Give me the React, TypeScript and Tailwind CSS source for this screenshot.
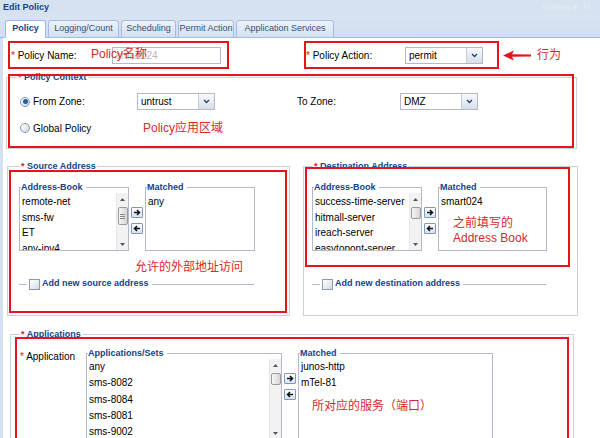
import React from "react";

const Star = () => <span className="text-[#e3141b]">*</span>;

function Chevron() {
  return (
    <svg width="7" height="5" viewBox="0 0 7 5">
      <path d="M1 1 L3.5 3.5 L6 1" fill="none" stroke="#21477c" strokeWidth="1.4" />
    </svg>
  );
}

function Select({ value, className }: { value: string; className: string }) {
  return (
    <div className={`flex h-[17px] border border-[#b5b8c8] bg-white ${className}`}>
      <span className="flex-1 pl-[3px] leading-[15px]">{value}</span>
      <span className="flex w-[16px] items-center justify-center border-l border-[#c5cad6] bg-gradient-to-b from-[#f8f9fb] to-[#d8dee8]">
        <Chevron />
      </span>
    </div>
  );
}

function Radio({ checked }: { checked?: boolean }) {
  return (
    <span className="flex h-[10px] w-[10px] items-center justify-center rounded-full border border-[#8794a8] bg-gradient-to-br from-white to-[#d3d8e0]">
      {checked && <span className="h-[5px] w-[5px] rounded-full bg-[#235d9f]" />}
    </span>
  );
}

function Tri({ up }: { up?: boolean }) {
  return (
    <svg width="5" height="3" viewBox="0 0 5 3">
      <path d={up ? "M0 3 L2.5 0 L5 3 Z" : "M0 0 L2.5 3 L5 0 Z"} fill="#555" />
    </svg>
  );
}

function Scrollbar({ thumb, grip }: { thumb: string; grip?: boolean }) {
  return (
    <div className="flex w-[12px] flex-col items-center border-l border-[#e6e6e6] bg-[#f2f2f2]">
      <div className="flex h-[12px] items-center justify-center">
        <Tri up />
      </div>
      <div
        className={`mt-[2px] flex w-[10px] flex-col items-center justify-center gap-[1px] rounded-[2px] border border-[#9a9a9a] bg-gradient-to-r from-[#f7f7f7] to-[#d4d4d4] ${thumb}`}
      >
        {grip && (
          <>
            <span className="h-px w-[5px] bg-[#888]" />
            <span className="h-px w-[5px] bg-[#888]" />
            <span className="h-px w-[5px] bg-[#888]" />
          </>
        )}
      </div>
      <div className="flex-1" />
      <div className="flex h-[12px] items-center justify-center">
        <Tri />
      </div>
    </div>
  );
}

type ListProps = {
  title: string;
  items: string[];
  w: string;
  h: string;
  lead: string;
  thumb?: string;
  grip?: boolean;
  children?: React.ReactNode;
};

function ListBox({ title, items, w, h, lead, thumb, grip, children }: ListProps) {
  return (
    <fieldset className={`border border-[#b5b8c8] ${w}`}>
      <legend className="ml-[1px] pr-[3px] text-[9px] font-bold leading-[11px] text-[#15428b]">{title}</legend>
      <div className={`flex overflow-hidden ${h}`}>
        <div className={`flex-1 overflow-hidden whitespace-nowrap pl-[2px] ${lead}`}>
          {items.map((i) => (
            <div key={i}>{i}</div>
          ))}
          {children}
        </div>
        {thumb && <Scrollbar thumb={thumb} grip={grip} />}
      </div>
    </fieldset>
  );
}

function ArrowBtn({ left }: { left?: boolean }) {
  return (
    <div className="flex h-[11px] w-[12px] items-center justify-center rounded-[1px] border border-[#7d98bf] bg-gradient-to-b from-white to-[#d9e2ee]">
      <svg width="8" height="7" viewBox="0 0 8 7">
        <path
          d={left ? "M7 3.5H1.5M4 1L1.5 3.5L4 6" : "M1 3.5H6.5M4 1L6.5 3.5L4 6"}
          fill="none"
          stroke="#111"
          strokeWidth="1.5"
        />
      </svg>
    </div>
  );
}

function MoveButtons() {
  return (
    <div className="ml-[2px] mr-[2px] mt-[25px] flex flex-col gap-[5px]">
      <ArrowBtn />
      <ArrowBtn left />
    </div>
  );
}

function AddRow({ label, w }: { label: string; w: string }) {
  return (
    <div className={`flex h-[12px] items-center ${w}`}>
      <span className="h-px w-[8px] bg-[#b5b8c8]" />
      <span className="ml-[2px] h-[11px] w-[11px] border border-[#8e9aab] bg-gradient-to-br from-white to-[#d6dbe3]" />
      <span className="ml-[2px] whitespace-nowrap text-[9px] font-bold text-[#15428b]">{label}</span>
      <span className="ml-[3px] h-px flex-1 bg-[#b5b8c8]" />
    </div>
  );
}

const tabs = [
  { label: "Policy", w: "w-[41px]", active: true },
  { label: "Logging/Count", w: "w-[71px]" },
  { label: "Scheduling", w: "w-[55px]" },
  { label: "Permit Action", w: "w-[56px]" },
  { label: "Application Services", w: "w-[98px]" },
];

const Legend = ({ ml, text }: { ml: string; text: string }) => (
  <legend className={`px-[1px] text-[9px] font-bold leading-[11px] text-[#15428b] ${ml}`}>
    <Star /> {text}
  </legend>
);

const note = "text-[12px] leading-[16px] text-[#d42a2a]";

export default function App() {
  return (
    <div className="flex h-[438px] w-[600px] flex-col overflow-hidden bg-white font-['Liberation_Sans','Noto_Sans_CJK_SC',sans-serif] text-[10px] text-black">
      {/* title bar */}
      <div className="flex h-[15px] shrink-0 items-center bg-[#d6e2f0] pl-[3px]">
        <span className="text-[9px] font-bold text-[#15428b]">Edit Policy</span>
        <span className="ml-auto mr-[10px] text-[9px] text-[#e4ebf4]">Actions ▾ &nbsp;H</span>
      </div>

      {/* tabs */}
      <div className="flex h-[23px] shrink-0 items-end gap-[2px] border-b border-[#99bbe8] bg-gradient-to-b from-[#d9e4f2] to-[#d2def0] pl-[5px]">
        {tabs.map((t) => (
          <div
            key={t.label}
            className={`-mb-px flex h-[18px] items-center justify-center whitespace-nowrap rounded-t-[3px] border text-[9px] ${t.w} ${
              t.active
                ? "border-[#99bbe8] border-b-white bg-white font-bold text-[#15428b]"
                : "border-[#a3bde0] bg-gradient-to-b from-[#edf2f9] to-[#d4e0f0] text-[#34507a]"
            }`}
          >
            {t.label}
          </div>
        ))}
      </div>

      {/* body */}
      <div className="shrink-0 border-l-[3px] border-[#d4e0ef] pb-[20px]">
        {/* policy name / action */}
        <div className="ml-[5px] mt-[3px] flex items-center">
          <div className="relative flex h-[28px] w-[221px] items-center border-2 border-[#e3141b]">
            <span className="ml-[1px] w-[101px]">
              <Star /> Policy Name:
            </span>
            <div className="h-[17px] w-[109px] border border-[#b5b8c8] pl-[3px] leading-[15px] text-[#b8b8b8]">smart024</div>
            <span className={`absolute left-[81px] top-[3px] ${note}`}>Policy名称</span>
          </div>
          <div className="ml-[75px] flex h-[28px] w-[195px] items-center border-2 border-[#e3141b]">
            <span className="w-[99px]">
              <Star /> Policy Action:
            </span>
            <Select className="w-[78px]" value="permit" />
          </div>
          <svg className="ml-[4px]" width="28" height="11" viewBox="0 0 28 11">
            <path d="M0 5.5 L11 0.5 L9 4.2 L28 4.6 L28 6.4 L9 6.8 L11 10.5 Z" fill="#e3141b" />
          </svg>
          <span className={`ml-[6px] ${note}`}>行为</span>
        </div>

        {/* policy context */}
        <fieldset className="ml-[3px] mt-[3px] w-[571px] border border-[#c9d1dc]">
          <Legend ml="ml-[10px]" text="Policy Context" />
          <div className="relative -mt-[9px] ml-[1px] h-[74px] w-[566px] border-2 border-[#e3141b]">
            <div className="mt-[17px] flex h-[17px] items-center">
              <div className="ml-[10px] flex w-[117px] items-center">
                <Radio checked />
                <span className="ml-[3px]">From Zone:</span>
              </div>
              <Select className="w-[78px]" value="untrust" />
              <span className="ml-[82px] w-[103px]">To Zone:</span>
              <Select className="w-[78px]" value="DMZ" />
            </div>
            <div className="mt-[10px] flex h-[16px] items-center">
              <div className="ml-[10px] flex w-[123px] items-center">
                <Radio />
                <span className="ml-[3px]">Global Policy</span>
              </div>
              <span className={note}>Policy应用区域</span>
            </div>
          </div>
        </fieldset>

        {/* source / destination */}
        <div className="mt-[12px] flex">
          <fieldset className="ml-[4px] w-[283px] border border-[#c9d1dc] pb-[2px]">
            <Legend ml="ml-[12px]" text="Source Address" />
            <div className="relative -mt-[2px] ml-[1px] h-[143px] w-[278px] border-2 border-[#e3141b] pt-[10px]">
              <div className="ml-[8px] flex items-start">
                <ListBox
                  title="Address-Book"
                  items={["remote-net", "sms-fw", "ET", "any-ipv4"]}
                  w="w-[110px]"
                  h="h-[57px]"
                  lead="pt-[1px] leading-[15.5px]"
                  thumb="h-[18px]"
                  grip
                />
                <MoveButtons />
                <ListBox title="Matched" items={["any"]} w="w-[110px]" h="h-[57px]" lead="pt-[1px] leading-[15.5px]" />
              </div>
              <div className={`ml-[124px] mt-[8px] ${note}`}>允许的外部地址访问</div>
              <div className="ml-[8px] mt-[3px]">
                <AddRow label="Add new source address" w="w-[235px]" />
              </div>
            </div>
          </fieldset>

          <fieldset className="ml-[13px] w-[275px] border border-[#c9d1dc]">
            <Legend ml="ml-[9px]" text="Destination Address" />
            <div className="relative -mt-[5px] ml-[1px] h-[100px] w-[265px] border-2 border-[#e3141b] pt-[13px]">
              <div className="ml-[5px] flex items-start">
                <ListBox
                  title="Address-Book"
                  items={["success-time-server", "hitmall-server", "ireach-server", "easytopont-server"]}
                  w="w-[110px]"
                  h="h-[57px]"
                  lead="pt-[1px] leading-[15.5px]"
                  thumb="h-[12px]"
                />
                <MoveButtons />
                <ListBox title="Matched" items={["smart024"]} w="w-[109px]" h="h-[57px]" lead="pt-[1px] leading-[15.5px]">
                  <div className="mt-[6px] pl-[12px] text-[12px] leading-[15px] text-[#d42a2a]">
                    之前填写的
                    <br />
                    Address Book
                  </div>
                </ListBox>
              </div>
            </div>
            <div className="ml-[8px] mt-[11px]">
              <AddRow label="Add new destination address" w="w-[234px]" />
            </div>
          </fieldset>
        </div>

        {/* applications */}
        <fieldset className="ml-[7px] mt-[13px] w-[564px] border border-[#c9d1dc]">
          <Legend ml="ml-[9px]" text="Applications" />
          <div className="relative -mt-[3px] ml-[4px] h-[120px] w-[554px] border-2 border-[#e3141b] pt-[9px]">
            <div className="flex items-start">
              <div className="mt-[3px] w-[69px] pl-[3px] leading-[12px]">
                <Star /> Application
              </div>
              <ListBox
                title="Applications/Sets"
                items={["any", "sms-8082", "sms-8084", "sms-8081", "sms-9002", "sms-9003"]}
                w="w-[196px]"
                h="h-[80px]"
                lead="leading-[16.25px]"
                thumb="h-[12px]"
              />
              <MoveButtons />
              <ListBox title="Matched" items={["junos-http", "mTel-81"]} w="w-[195px]" h="h-[80px]" lead="leading-[16.25px]">
                <div className="mt-[7px] pl-[11px] text-[12px] leading-[15px] text-[#d42a2a]">所对应的服务（端口）</div>
              </ListBox>
            </div>
          </div>
        </fieldset>
      </div>
    </div>
  );
}
